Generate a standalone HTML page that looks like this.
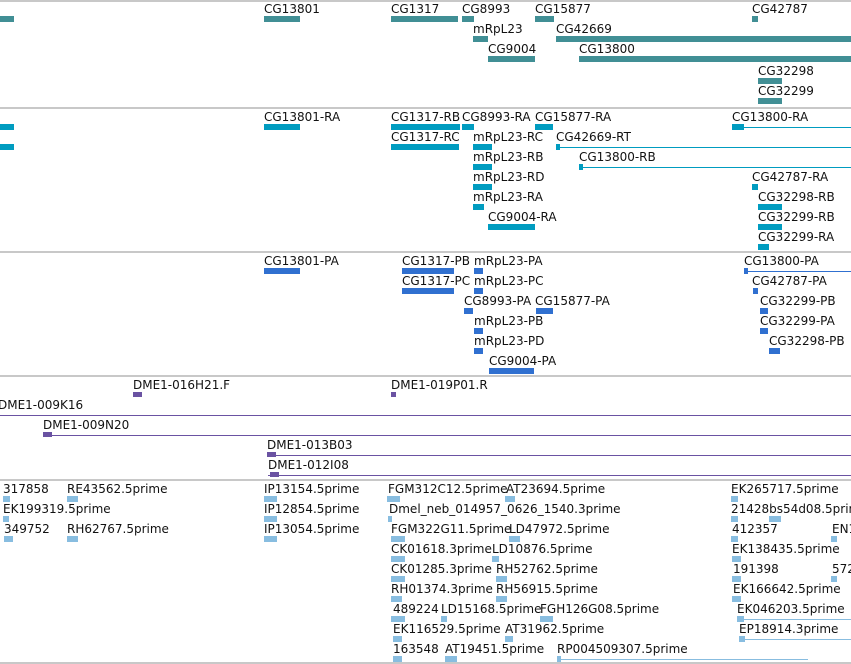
<!DOCTYPE html>
<html><head><meta charset="utf-8"><style>
body{margin:0;width:851px;height:664px;overflow:hidden;background:#fff;position:relative;font-family:"DejaVu Sans","Liberation Sans",sans-serif}
div{position:absolute}
.s{left:0;width:851px;height:2px;background:#c8c8c8}
.l{font-size:12px;line-height:14px;color:#111;white-space:nowrap}
.g{background:#418f95;height:6px}
.t{background:#009cc0;height:6px}
.p{background:#3070d0;height:6px}
.c{background:#6a52a2;height:5px}
.e{background:#88bde0;height:6px}
.tl{background:#009cc0;height:1px}
.pl{background:#3070d0;height:1px}
.cl{background:#6a52a2;height:1px}
.el{background:#88bde0;height:1px}
</style></head><body>
<div class="s" style="top:0"></div>
<div class="s" style="top:107px"></div>
<div class="s" style="top:251px"></div>
<div class="s" style="top:375px"></div>
<div class="s" style="top:479px"></div>

<!-- genes -->
<div class="g" style="left:0;top:16px;width:14px"></div>
<div class="l" style="left:264px;top:2px">CG13801</div><div class="g" style="left:264px;top:16px;width:36px"></div>
<div class="l" style="left:391px;top:2px">CG1317</div><div class="g" style="left:391px;top:16px;width:67px"></div>
<div class="l" style="left:462px;top:2px">CG8993</div><div class="g" style="left:462px;top:16px;width:12px"></div>
<div class="l" style="left:535px;top:2px">CG15877</div><div class="g" style="left:535px;top:16px;width:19px"></div>
<div class="l" style="left:752px;top:2px">CG42787</div><div class="g" style="left:752px;top:16px;width:6px"></div>
<div class="l" style="left:473px;top:22px">mRpL23</div><div class="g" style="left:473px;top:36px;width:15px"></div>
<div class="l" style="left:556px;top:22px">CG42669</div><div class="g" style="left:556px;top:36px;width:295px"></div>
<div class="l" style="left:488px;top:42px">CG9004</div><div class="g" style="left:488px;top:56px;width:47px"></div>
<div class="l" style="left:579px;top:42px">CG13800</div><div class="g" style="left:579px;top:56px;width:272px"></div>
<div class="l" style="left:758px;top:64px">CG32298</div><div class="g" style="left:758px;top:78px;width:24px"></div>
<div class="l" style="left:758px;top:84px">CG32299</div><div class="g" style="left:758px;top:98px;width:24px"></div>

<!-- transcripts -->
<div class="t" style="left:0;top:124px;width:14px"></div>
<div class="t" style="left:0;top:144px;width:14px"></div>
<div class="l" style="left:264px;top:110px">CG13801-RA</div><div class="t" style="left:264px;top:124px;width:36px"></div>
<div class="l" style="left:391px;top:110px">CG1317-RB</div><div class="t" style="left:391px;top:124px;width:69px"></div>
<div class="l" style="left:462px;top:110px">CG8993-RA</div><div class="t" style="left:462px;top:124px;width:12px"></div>
<div class="l" style="left:535px;top:110px">CG15877-RA</div><div class="t" style="left:535px;top:124px;width:18px"></div>
<div class="l" style="left:732px;top:110px">CG13800-RA</div><div class="t" style="left:732px;top:124px;width:12px"></div><div class="tl" style="left:744px;top:127px;width:107px"></div>
<div class="l" style="left:391px;top:130px">CG1317-RC</div><div class="t" style="left:391px;top:144px;width:68px"></div>
<div class="l" style="left:473px;top:130px">mRpL23-RC</div><div class="t" style="left:473px;top:144px;width:19px"></div>
<div class="l" style="left:556px;top:130px">CG42669-RT</div><div class="t" style="left:556px;top:144px;width:4px"></div><div class="tl" style="left:556px;top:147px;width:295px"></div>
<div class="l" style="left:473px;top:150px">mRpL23-RB</div><div class="t" style="left:473px;top:164px;width:19px"></div>
<div class="l" style="left:579px;top:150px">CG13800-RB</div><div class="t" style="left:579px;top:164px;width:4px"></div><div class="tl" style="left:579px;top:167px;width:272px"></div>
<div class="l" style="left:473px;top:170px">mRpL23-RD</div><div class="t" style="left:473px;top:184px;width:19px"></div>
<div class="l" style="left:752px;top:170px">CG42787-RA</div><div class="t" style="left:752px;top:184px;width:6px"></div>
<div class="l" style="left:473px;top:190px">mRpL23-RA</div><div class="t" style="left:473px;top:204px;width:11px"></div>
<div class="l" style="left:758px;top:190px">CG32298-RB</div><div class="t" style="left:758px;top:204px;width:24px"></div>
<div class="l" style="left:488px;top:210px">CG9004-RA</div><div class="t" style="left:488px;top:224px;width:47px"></div>
<div class="l" style="left:758px;top:210px">CG32299-RB</div><div class="t" style="left:758px;top:224px;width:24px"></div>
<div class="l" style="left:758px;top:230px">CG32299-RA</div><div class="t" style="left:758px;top:244px;width:11px"></div>

<!-- proteins -->
<div class="l" style="left:264px;top:254px">CG13801-PA</div><div class="p" style="left:264px;top:268px;width:36px"></div>
<div class="l" style="left:402px;top:254px">CG1317-PB</div><div class="p" style="left:402px;top:268px;width:52px"></div>
<div class="l" style="left:474px;top:254px">mRpL23-PA</div><div class="p" style="left:474px;top:268px;width:9px"></div>
<div class="l" style="left:744px;top:254px">CG13800-PA</div><div class="p" style="left:744px;top:268px;width:4px"></div><div class="pl" style="left:744px;top:271px;width:107px"></div>
<div class="l" style="left:402px;top:274px">CG1317-PC</div><div class="p" style="left:402px;top:288px;width:52px"></div>
<div class="l" style="left:474px;top:274px">mRpL23-PC</div><div class="p" style="left:474px;top:288px;width:9px"></div>
<div class="l" style="left:752px;top:274px">CG42787-PA</div><div class="p" style="left:753px;top:288px;width:5px"></div>
<div class="l" style="left:464px;top:294px">CG8993-PA</div><div class="p" style="left:464px;top:308px;width:9px"></div>
<div class="l" style="left:535px;top:294px">CG15877-PA</div><div class="p" style="left:536px;top:308px;width:17px"></div>
<div class="l" style="left:760px;top:294px">CG32299-PB</div><div class="p" style="left:760px;top:308px;width:8px"></div>
<div class="l" style="left:474px;top:314px">mRpL23-PB</div><div class="p" style="left:474px;top:328px;width:9px"></div>
<div class="l" style="left:760px;top:314px">CG32299-PA</div><div class="p" style="left:760px;top:328px;width:8px"></div>
<div class="l" style="left:474px;top:334px">mRpL23-PD</div><div class="p" style="left:474px;top:348px;width:9px"></div>
<div class="l" style="left:769px;top:334px">CG32298-PB</div><div class="p" style="left:769px;top:348px;width:11px"></div>
<div class="l" style="left:489px;top:354px">CG9004-PA</div><div class="p" style="left:489px;top:368px;width:45px"></div>

<!-- clones -->
<div class="l" style="left:133px;top:378px">DME1-016H21.F</div><div class="c" style="left:133px;top:392px;width:9px"></div>
<div class="l" style="left:391px;top:378px">DME1-019P01.R</div><div class="c" style="left:391px;top:392px;width:5px"></div>
<div class="l" style="left:-2px;top:398px">DME1-009K16</div><div class="cl" style="left:0;top:415px;width:851px"></div>
<div class="l" style="left:43px;top:418px">DME1-009N20</div><div class="c" style="left:43px;top:432px;width:9px"></div><div class="cl" style="left:43px;top:435px;width:808px"></div>
<div class="l" style="left:267px;top:438px">DME1-013B03</div><div class="c" style="left:267px;top:452px;width:9px"></div><div class="cl" style="left:267px;top:455px;width:584px"></div>
<div class="l" style="left:268px;top:458px">DME1-012I08</div><div class="c" style="left:270px;top:472px;width:9px"></div><div class="cl" style="left:268px;top:475px;width:583px"></div>

<!-- ESTs -->
<div class="l" style="left:3px;top:482px">317858</div><div class="e" style="left:3px;top:496px;width:7px"></div>
<div class="l" style="left:67px;top:482px">RE43562.5prime</div><div class="e" style="left:67px;top:496px;width:11px"></div>
<div class="l" style="left:264px;top:482px">IP13154.5prime</div><div class="e" style="left:264px;top:496px;width:13px"></div>
<div class="l" style="left:388px;top:482px">FGM312C12.5prime</div><div class="e" style="left:387px;top:496px;width:13px"></div>
<div class="l" style="left:506px;top:482px">AT23694.5prime</div><div class="e" style="left:505px;top:496px;width:10px"></div>
<div class="l" style="left:731px;top:482px">EK265717.5prime</div><div class="e" style="left:731px;top:496px;width:7px"></div>
<div class="l" style="left:3px;top:502px">EK199319.5prime</div><div class="e" style="left:3px;top:516px;width:6px"></div>
<div class="l" style="left:264px;top:502px">IP12854.5prime</div><div class="e" style="left:264px;top:516px;width:13px"></div>
<div class="l" style="left:389px;top:502px">Dmel_neb_014957_0626_1540.3prime</div><div class="e" style="left:388px;top:516px;width:4px"></div>
<div class="l" style="left:731px;top:502px">21428bs54d08.5prime</div><div class="e" style="left:731px;top:516px;width:7px"></div><div class="e" style="left:769px;top:516px;width:12px"></div>
<div class="l" style="left:4px;top:522px">349752</div><div class="e" style="left:4px;top:536px;width:9px"></div>
<div class="l" style="left:67px;top:522px">RH62767.5prime</div><div class="e" style="left:67px;top:536px;width:11px"></div>
<div class="l" style="left:264px;top:522px">IP13054.5prime</div><div class="e" style="left:264px;top:536px;width:13px"></div>
<div class="l" style="left:391px;top:522px">FGM322G11.5prime</div><div class="e" style="left:391px;top:536px;width:14px"></div>
<div class="l" style="left:509px;top:522px">LD47972.5prime</div><div class="e" style="left:509px;top:536px;width:11px"></div>
<div class="l" style="left:732px;top:522px">412357</div><div class="e" style="left:731px;top:536px;width:7px"></div>
<div class="l" style="left:832px;top:522px">EN1</div><div class="e" style="left:831px;top:536px;width:6px"></div>
<div class="l" style="left:391px;top:542px">CK01618.3prime</div><div class="e" style="left:391px;top:556px;width:14px"></div>
<div class="l" style="left:492px;top:542px">LD10876.5prime</div><div class="e" style="left:492px;top:556px;width:7px"></div>
<div class="l" style="left:732px;top:542px">EK138435.5prime</div><div class="e" style="left:732px;top:556px;width:9px"></div>
<div class="l" style="left:391px;top:562px">CK01285.3prime</div><div class="e" style="left:391px;top:576px;width:14px"></div>
<div class="l" style="left:496px;top:562px">RH52762.5prime</div><div class="e" style="left:496px;top:576px;width:11px"></div>
<div class="l" style="left:733px;top:562px">191398</div><div class="e" style="left:732px;top:576px;width:9px"></div>
<div class="l" style="left:832px;top:562px">572</div><div class="e" style="left:831px;top:576px;width:6px"></div>
<div class="l" style="left:391px;top:582px">RH01374.3prime</div><div class="e" style="left:391px;top:596px;width:11px"></div>
<div class="l" style="left:496px;top:582px">RH56915.5prime</div><div class="e" style="left:496px;top:596px;width:11px"></div>
<div class="l" style="left:733px;top:582px">EK166642.5prime</div><div class="e" style="left:732px;top:596px;width:9px"></div>
<div class="l" style="left:393px;top:602px">489224</div><div class="e" style="left:391px;top:616px;width:14px"></div>
<div class="l" style="left:441px;top:602px">LD15168.5prime</div><div class="e" style="left:441px;top:616px;width:6px"></div>
<div class="l" style="left:540px;top:602px">FGH126G08.5prime</div><div class="e" style="left:540px;top:616px;width:13px"></div>
<div class="l" style="left:737px;top:602px">EK046203.5prime</div><div class="e" style="left:737px;top:616px;width:7px"></div><div class="el" style="left:737px;top:619px;width:114px"></div>
<div class="l" style="left:393px;top:622px">EK116529.5prime</div><div class="e" style="left:393px;top:636px;width:9px"></div>
<div class="l" style="left:505px;top:622px">AT31962.5prime</div><div class="e" style="left:505px;top:636px;width:8px"></div>
<div class="l" style="left:739px;top:622px">EP18914.3prime</div><div class="e" style="left:739px;top:636px;width:6px"></div><div class="el" style="left:739px;top:639px;width:112px"></div>
<div class="l" style="left:393px;top:642px">163548</div><div class="e" style="left:393px;top:656px;width:9px"></div>
<div class="l" style="left:445px;top:642px">AT19451.5prime</div><div class="e" style="left:445px;top:656px;width:12px"></div>
<div class="l" style="left:557px;top:642px">RP004509307.5prime</div><div class="e" style="left:557px;top:656px;width:4px"></div><div class="el" style="left:557px;top:659px;width:251px"></div>
<div class="s" style="top:662px"></div>
</body></html>
